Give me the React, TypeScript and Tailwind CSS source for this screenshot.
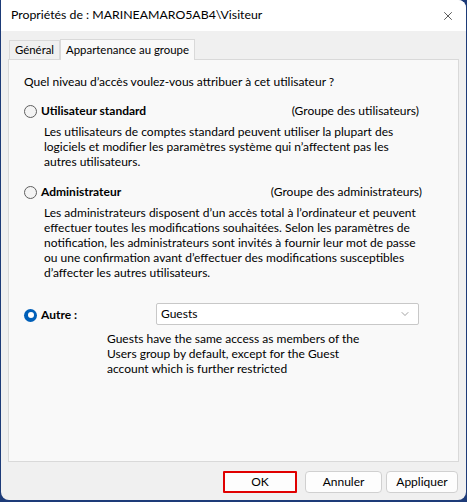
import { X, ChevronDown } from "lucide-react";

const font = { fontFamily: "Lato, 'Noto Sans', sans-serif" };

function Radio({ checked = false }: { checked?: boolean }) {
  if (checked) {
    return (
      <span className="w-[13px] h-[13px] rounded-full bg-[#005fb8] flex items-center justify-center shrink-0">
        <span className="w-[6px] h-[6px] rounded-full bg-white" />
      </span>
    );
  }
  return <span className="w-[13px] h-[13px] rounded-full border border-[#5f5f5f] bg-[#f4f4f4] shrink-0" />;
}

export default function App() {
  return (
    <div className="w-[467px] h-[502px] bg-[#1d3b78] text-[12px] text-black" style={font}>
      <div className="w-[465px] h-[500px] ml-[1px] bg-[#f0f0f0] rounded-b-[8px] rounded-tr-[8px] flex flex-col overflow-hidden">
        {/* title bar */}
        <div className="h-[31px] bg-white flex items-center justify-between pl-[10px] pr-[11px] shrink-0">
          <span className="text-[12.3px]">Propriétés de : MARINEAMARO5AB4\Visiteur</span>
          <X className="w-[14px] h-[14px] text-black" strokeWidth={1.1} />
        </div>

        <div className="flex-1 flex flex-col px-[7px] pt-[7px]">
          {/* tabs */}
          <div className="flex items-end h-[21px] text-[11.4px]">
            <div className="h-[19px] px-[5px] border border-b-0 border-[#d9d9d9] bg-[#f0f0f0] flex items-center ml-[1px]">
              Général
            </div>
            <div className="h-[21px] px-[5px] border border-b-0 border-[#d9d9d9] bg-[#f9f9f9] flex items-center -mb-px relative z-10">
              Appartenance au groupe
            </div>
          </div>

          {/* panel */}
          <div className="h-[403px] border border-[#d9d9d9] bg-[#f9f9f9] pl-[15px] pr-[39px] pt-[14px]">
            <p className="leading-[16px]">Quel niveau d’accès voulez-vous attribuer à cet utilisateur ?</p>

            <div className="mt-[13px] flex items-center justify-between h-[16px]">
              <label className="flex items-center gap-[4px]">
                <Radio />
                <span className="font-bold">Utilisateur standard</span>
              </label>
              <span>(Groupe des utilisateurs)</span>
            </div>
            <p className="pl-[20px] mt-[5px] leading-[15px]">
              Les utilisateurs de comptes standard peuvent utiliser la plupart des logiciels et modifier les paramètres système qui n’affectent pas les autres utilisateurs.
            </p>

            <div className="mt-[15px] flex items-center justify-between h-[16px]">
              <label className="flex items-center gap-[4px]">
                <Radio />
                <span className="font-bold">Administrateur</span>
              </label>
              <span className="-mr-[3px]">(Groupe des administrateurs)</span>
            </div>
            <p className="pl-[20px] mt-[5px] leading-[15px]">
              Les administrateurs disposent d’un accès total à l’ordinateur et peuvent effectuer toutes les modifications souhaitées. Selon les paramètres de notification, les administrateurs sont invités à fournir leur mot de passe ou une confirmation avant d’effectuer des modifications susceptibles d’affecter les autres utilisateurs.
            </p>

            <div className="mt-[23px] flex items-center h-[22px]">
              <label className="flex items-center gap-[4px] w-[132px] mt-[2px]">
                <Radio checked />
                <span className="font-bold">Autre :</span>
              </label>
              <div className="flex-1 h-[22px] border border-[#c8c8c8] bg-white rounded-[2px] flex items-center justify-between pl-[4px] pr-[7px]">
                <span>Guests</span>
                <ChevronDown className="w-[12px] h-[12px] text-[#555]" strokeWidth={1.1} />
              </div>
            </div>
            <p className="ml-[83px] w-[260px] mt-[6px] leading-[15px]">
              Guests have the same access as members of the Users group by default, except for the Guest account which is further restricted
            </p>
          </div>

          {/* buttons */}
          <div className="flex justify-end mt-[9px] pr-[1px]">
            <button className="w-[74px] h-[22px] border-2 border-[#e00000] bg-[#fdfdfd] rounded-[1px]">OK</button>
            <button className="ml-[8px] w-[77px] h-[22px] border border-[#d0d0d0] bg-[#fdfdfd] rounded-[4px]">Annuler</button>
            <button className="ml-[4px] w-[72px] h-[22px] border border-[#d0d0d0] bg-[#fdfdfd] rounded-[4px]">Appliquer</button>
          </div>
        </div>
      </div>
    </div>
  );
}
